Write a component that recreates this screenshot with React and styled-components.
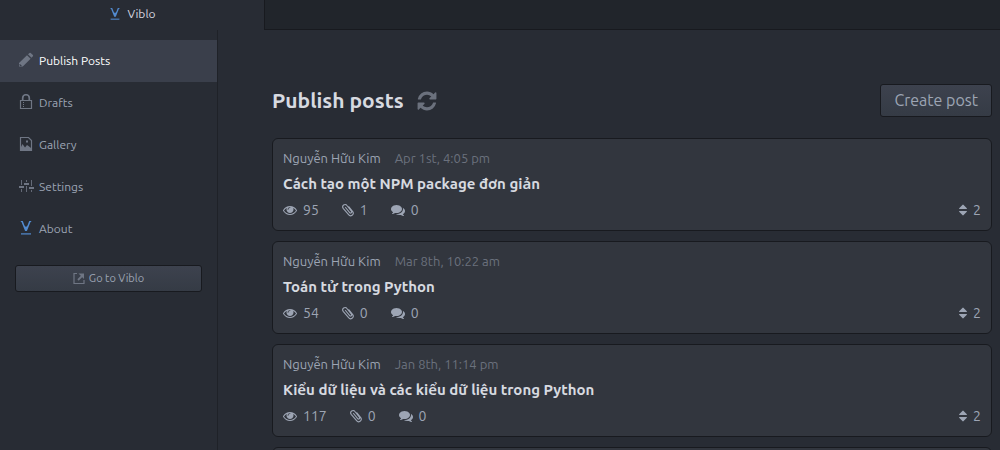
import React from "react";
import styled, { createGlobalStyle } from "styled-components";

const GlobalStyle = createGlobalStyle`
  *, *::before, *::after { box-sizing: border-box; }
  html, body, #root { height: 100%; }
  body {
    margin: 0;
    overflow: hidden;
    background: #282c34;
    color: #9da5b4;
    font-family: Ubuntu, "Noto Sans", sans-serif;
    font-size: 12px;
  }
  button { font: inherit; color: inherit; cursor: pointer; }
  a { color: inherit; text-decoration: none; }
  h1, h2, p, ul { margin: 0; padding: 0; }
`;

const Window = styled.div`
  display: flex;
  flex-direction: column;
  height: 100vh;
`;

const TabBar = styled.header`
  display: flex;
  flex: none;
  height: 30px;
`;

const Tab = styled.div`
  display: flex;
  align-items: center;
  justify-content: center;
  gap: 5px;
  width: 264px;
  color: #d7dae0;
  line-height: 28px;
  padding-bottom: 2px;
`;

const TabFill = styled.div`
  flex: 1;
  background: #21252b;
  border-left: 1px solid #181a1f;
  border-bottom: 1px solid #181a1f;
`;

const Workspace = styled.div`
  display: flex;
  flex: 1;
  min-height: 0;
`;

const Sidebar = styled.nav`
  flex: none;
  width: 218px;
  padding-top: 10px;
  border-right: 1px solid #1f2228;
`;

const Menu = styled.ul`
  list-style: none;
`;

const MenuLink = styled.a`
  display: flex;
  align-items: center;
  gap: 5px;
  height: 42px;
  padding: 0 18px 2px;
  color: ${(p) => (p.$active ? "#ffffff" : "#9da5b4")};
  background: ${(p) => (p.$active ? "#3a3f4b" : "transparent")};

  svg {
    color: ${(p) => (p.$brand ? "#528bd0" : "#6f7684")};
  }
`;

const Button = styled.button`
  display: flex;
  align-items: center;
  justify-content: center;
  border: 1px solid #181a1f;
  border-radius: 3px;
  background: linear-gradient(#3d424e, #353b45);
`;

const VisitButton = styled(Button)`
  gap: 4px;
  width: calc(100% - 30px);
  height: 27px;
  margin: 15px 15px 0;
  padding: 0 0 2px;
  font-size: 11px;

  svg { color: #6f7684; }
`;

const CreateButton = styled(Button)`
  height: 33px;
  padding: 0 13px 2px;
  font-size: 16px;
`;

const Main = styled.main`
  flex: 1;
  min-width: 0;
  padding: 54px 8px 0 54px;
  overflow: hidden;
`;

const Heading = styled.div`
  display: flex;
  align-items: center;
  justify-content: space-between;
  margin-bottom: 21px;
`;

const HeadingGroup = styled.div`
  display: flex;
  align-items: center;
  gap: 12px;
`;

const Title = styled.h1`
  color: #d7dae0;
  font-size: 21px;
  font-weight: 700;
  line-height: 30px;
  padding-bottom: 2px;
`;

const RefreshButton = styled.button`
  display: flex;
  padding: 0;
  border: 0;
  background: none;
  color: #6b717d;
`;

const PostList = styled.div`
  display: flex;
  flex-direction: column;
  gap: 10px;
`;

const Card = styled.article`
  padding: 9px 10px 10px;
  border: 1px solid #181a1f;
  border-radius: 6px;
  background: #32363e;
`;

const Byline = styled.p`
  display: flex;
  gap: 14px;
  font-size: 13px;
  line-height: 20px;
`;

const PostDate = styled.time`
  color: #6b717d;
`;

const PostTitle = styled.h2`
  color: #d7dae0;
  font-size: 15px;
  font-weight: 600;
  line-height: 32px;
`;

const Stats = styled.div`
  display: flex;
  gap: 23px;
  font-size: 14px;
  line-height: 20px;
`;

const Stat = styled.span`
  display: flex;
  align-items: center;
  gap: 6px;
  margin-left: ${(p) => (p.$end ? "auto" : "0")};
`;

const Glyph = ({ d, size, box = "0 0 1792 1792", width = size }) => (
  <svg width={width} height={size} viewBox={box} fill="currentColor" aria-hidden="true">
    <path d={d} />
  </svg>
);

const REFRESH =
  "M1639 1056q0 5-1 7-64 268-268 434.5t-478 166.5q-146 0-282.5-55t-243.5-157l-129 129q-19 19-45 19t-45-19-19-45v-448q0-26 19-45t45-19h448q26 0 45 19t19 45-19 45l-137 137q71 66 161 102t187 36q134 0 250-65t186-179q11-17 53-117 8-23 30-23h192q13 0 22.5 9.5t9.5 22.5zm25-800v448q0 26-19 45t-45 19h-448q-26 0-45-19t-19-45 19-45l138-138q-148-137-349-137-134 0-250 65t-186 179q-11 17-53 117-8 23-30 23h-199q-13 0-22.5-9.5t-9.5-22.5v-7q65-268 270-434.5t480-166.5q146 0 284 55.5t245 156.5l130-129q19-19 45-19t45 19 19 45z";
const EYE =
  "M1664 960q-152-236-381-353 61 104 61 225 0 185-131.5 316.5t-316.5 131.5-316.5-131.5-131.5-316.5q0-121 61-225-229 117-381 353 133 205 333.5 326.5t434.5 121.5 434.5-121.5 333.5-326.5zm-720-384q0-20-14-34t-34-14q-125 0-214.5 89.5t-89.5 214.5q0 20 14 34t34 14 34-14 14-34q0-86 61-147t147-61q20 0 34-14t14-34zm848 384q0 34-20 69-140 230-376.5 368.5t-499.5 138.5-499.5-139-376.5-368q-20-35-20-69t20-69q140-229 376.5-368t499.5-139 499.5 139 376.5 368q20 35 20 69z";
const COMMENTS =
  "M1408 768q0 139-94 257t-256.5 186.5-353.5 68.5q-86 0-176-16-124 88-278 128-36 9-86 16h-3q-11 0-20.5-8t-11.5-21q-1-3-1-6.5t.5-6.5 2-6l2.5-5 3.5-5.5 4-5 4.5-5 4-4.5q5-6 23-25t26-29.5 22.5-29 25-38.5 20.5-44q-124-72-195-177t-71-224q0-139 94-257t256.5-186.5 353.5-68.5 353.5 68.5 256.5 186.5 94 257zm384 256q0 120-71 224.5t-195 176.5q10 24 20.5 44t25 38.5 22.5 29 26 29.5 23 25q1 1 4 4.5t4.5 5 4 5 3.5 5.5l2.5 5 2 6 .5 6.5-1 6.5q-3 14-13 22t-22 7q-50-7-86-16-154-40-278-128-90 16-176 16-271 0-472-132 58 4 88 4 161 0 309-45t264-129q125-92 192-212t67-254q0-77-23-152 129 71 204 178t75 230z";
const SORT =
  "M1408 1088q0 26-19 45l-448 448q-19 19-45 19t-45-19l-448-448q-19-19-19-45t19-45 45-19h896q26 0 45 19t19 45zm0-384q0 26-19 45t-45 19h-896q-26 0-45-19t-19-45 19-45l448-448q19-19 45-19t45 19l448 448q19 19 19 45z";

const PencilIcon = () => (
  <svg width="16" height="16" viewBox="0 0 16 16" fill="currentColor" aria-hidden="true">
    <path d="M1 11 9 3.200 12.600 6.800 4.800 14.500H1z M10 2.300 11.500.900q.6-.5 1.200 0L14.900 3.100q.5.6 0 1.200L13.500 5.800z" />
    <path d="M2 12v1.500h1.500" fill="none" stroke="#3a3f4b" strokeWidth="1" />
  </svg>
);

const LockIcon = () => (
  <svg width="16" height="16" viewBox="0 0 16 16" fill="none" stroke="currentColor" aria-hidden="true">
    <path d="M2.500 6.500h11v8h-11z" strokeWidth="1.200" />
    <path d="M4.700 6.500V4a3.300 3.300 0 0 1 6.600 0v2.500" strokeWidth="1.700" />
    <path d="M5.500 8v5" strokeDasharray="1 1" />
  </svg>
);

const GalleryIcon = () => (
  <svg width="16" height="16" viewBox="0 0 16 16" aria-hidden="true">
    <path d="M2.500 1.500h8l3 3v10h-11z" fill="none" stroke="currentColor" strokeWidth="1.200" />
    <path d="M3 14V11l1.500-3L7 11.500 9 9l1.500 1L13 12v2z M8 4.500h2v2H8z" fill="currentColor" />
  </svg>
);

const SettingsIcon = () => (
  <svg width="16" height="16" viewBox="0 0 16 16" fill="currentColor" aria-hidden="true">
    <path d="M1 8h5v2H1zM6 5h5v2H6zM11 9h5v2h-5z" />
    <path d="M3 2h1v5H3zM3 11h1v3H3zM8 2h1v2H8zM8 8h1v6H8zM13 2h1v6h-1zM13 12h1v2h-1z" opacity=".85" />
  </svg>
);

const VibloIcon = ({ size = 16 }) => (
  <svg width={size} height={size} viewBox="0 0 16 16" fill="currentColor" aria-hidden="true">
    <path d="M2.800 1h2l1.700 4.500L8 7l1.500-1.500L11.200 1h2v1h-.7L8.900 11H7.100L3.500 2h-.7z" />
    <path d="M3 13.300h10v1.200H3z" />
  </svg>
);

const ExternalIcon = () => (
  <svg width="12" height="12" viewBox="0 0 12 12" fill="none" stroke="currentColor" aria-hidden="true">
    <path d="M4 1.500H1v10h10V8" strokeWidth="1.200" />
    <path d="M5 8 9 4" strokeWidth="1.800" />
    <path d="M5.500 1.500H11V7z" fill="currentColor" stroke="none" />
  </svg>
);

const ClipIcon = () => (
  <svg width="12" height="14" viewBox="0 0 12 14" fill="none" stroke="currentColor" strokeLinecap="round" aria-hidden="true">
    <path d="M3.500 4.500 7.700 9.600a1.100 1.100 0 0 0 1.700-1.400L4.900 2.500a2.300 2.300 0 0 0-3.700 2.800l5.400 6.400a2.600 2.600 0 0 0 4.300-2.900L6.900 3.800" strokeWidth="1.100" />
  </svg>
);

const MENU = [
  { label: "Publish Posts", icon: <PencilIcon />, active: true },
  { label: "Drafts", icon: <LockIcon /> },
  { label: "Gallery", icon: <GalleryIcon /> },
  { label: "Settings", icon: <SettingsIcon /> },
  { label: "About", icon: <VibloIcon />, brand: true },
];

const POSTS = [
  { date: "Apr 1st, 4:05 pm", title: "Cách tạo một NPM package đơn giản", views: 95, clips: 1 },
  { date: "Mar 8th, 10:22 am", title: "Toán tử trong Python", views: 54, clips: 0 },
  { date: "Jan 8th, 11:14 pm", title: "Kiểu dữ liệu và các kiểu dữ liệu trong Python", views: 117, clips: 0 },
];

const BrandMark = styled.span`
  display: flex;
  color: #528bd0;
`;

const Post = ({ post }) => (
  <Card>
    <Byline>
      <span>Nguyễn Hữu Kim</span>
      <PostDate>{post.date}</PostDate>
    </Byline>
    <PostTitle>{post.title}</PostTitle>
    <Stats>
      <Stat><Glyph d={EYE} size={14} />{post.views}</Stat>
      <Stat><ClipIcon />{post.clips}</Stat>
      <Stat><Glyph d={COMMENTS} size={14} />0</Stat>
      <Stat $end><Glyph d={SORT} width={8} size={14} box="384 0 1024 1792" />2</Stat>
    </Stats>
  </Card>
);

export default function App() {
  return (
    <Window>
      <GlobalStyle />
      <TabBar>
        <Tab><BrandMark><VibloIcon size={14} /></BrandMark>Viblo</Tab>
        <TabFill />
      </TabBar>
      <Workspace>
        <Sidebar>
          <Menu>
            {MENU.map((m) => (
              <li key={m.label}>
                <MenuLink href="#" $active={m.active} $brand={m.brand}>{m.icon}{m.label}</MenuLink>
              </li>
            ))}
          </Menu>
          <VisitButton type="button"><ExternalIcon />Go to Viblo</VisitButton>
        </Sidebar>
        <Main>
          <Heading>
            <HeadingGroup>
              <Title>Publish posts</Title>
              <RefreshButton type="button" aria-label="Refresh"><Glyph d={REFRESH} size={22} /></RefreshButton>
            </HeadingGroup>
            <CreateButton type="button">Create post</CreateButton>
          </Heading>
          <PostList>
            {POSTS.map((p) => <Post key={p.title} post={p} />)}
            <Card />
          </PostList>
        </Main>
      </Workspace>
    </Window>
  );
}
